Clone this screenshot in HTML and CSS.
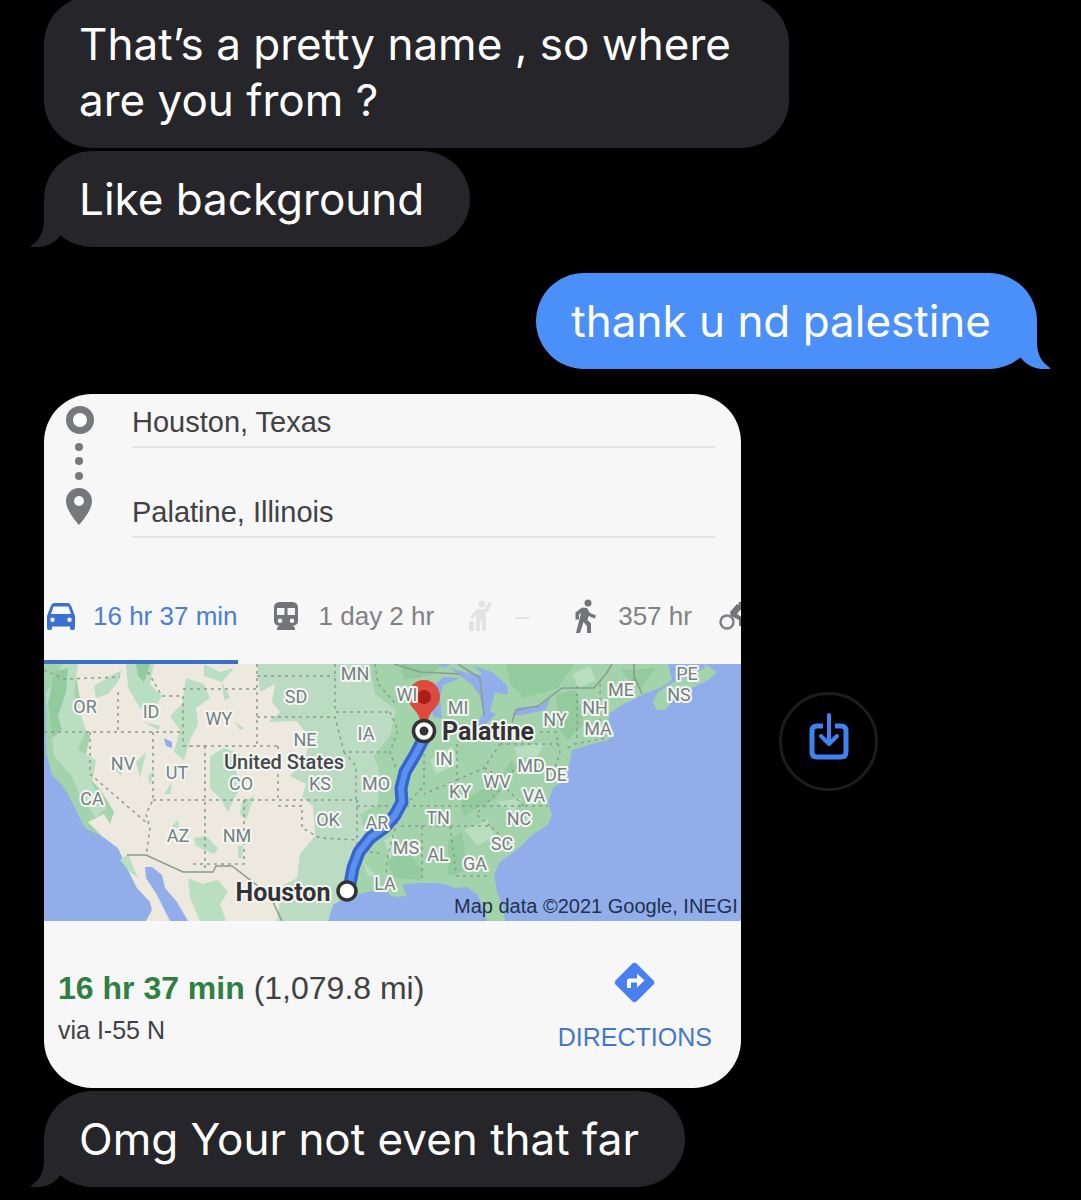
FILE: index.html
```html
<!DOCTYPE html>
<html lang="en">
<head>
  <meta charset="UTF-8" />
  <meta name="viewport" content="width=device-width, initial-scale=1.0"/>
  <title>Messages</title>
  <link rel="stylesheet" href="styles.css">
</head>
<body>

  <!-- Shared shapes -->
  <svg class="defs" aria-hidden="true">
    <symbol id="tail" viewBox="0 0 44 44">
      <path d="M15 0V17C15 30 10 38 1 43.500C12 46 24 42 31 33L44 20V0Z"/>
    </symbol>
  </svg>

  <main class="thread">
    <p class="bubble received">That’s a pretty name , so where are you from ?</p>
    <p class="bubble received last">Like background<svg class="tail"><use href="#tail"/></svg></p>

    <p class="bubble sent last">thank u nd palestine<svg class="tail"><use href="#tail"/></svg></p>

    <div class="attachment">
      <article class="card">
        <!-- From / to -->
        <form class="route-form">
          <svg class="stops" viewBox="0 0 88 144" aria-hidden="true">
            <circle cx="36" cy="26" r="10.500" fill="#fff" stroke="#77787c" stroke-width="7"/>
            <circle cx="35" cy="53" r="4"/>
            <circle cx="35" cy="67" r="4"/>
            <circle cx="35" cy="82" r="4"/>
            <path fill-rule="evenodd" d="M35 94C27.500 94 22 100 22 107C22 117 35 131 35 131S48 117 48 107C48 100 42.500 94 35 94ZM35 102a5 5 0 1 1 0 10a5 5 0 0 1 0-10Z"/>
          </svg>
          <div class="fields">
            <input type="text" value="Houston, Texas" aria-label="From">
            <input type="text" value="Palatine, Illinois" aria-label="To">
          </div>
        </form>

        <!-- Travel modes -->
        <nav class="modes">
          <button class="mode active">
            <svg viewBox="0 0 28 28"><path fill-rule="evenodd" d="M7 1H21Q23 1 24 3.500L28 14V26Q28 28 26 28H24.500Q23 28 23 26V24.500H5V26Q5 28 3.500 28H2Q0 28 0 26V14L4 3.500Q5 1 7 1ZM6.500 4.500L4 12H24L21.500 4.500ZM5.500 15.500a2.200 2.200 0 1 0 0 4.400a2.200 2.200 0 0 0 0-4.400ZM22.500 15.500a2.200 2.200 0 1 0 0 4.400a2.200 2.200 0 0 0 0-4.400Z"/></svg>
            16 hr 37 min
          </button>
          <button class="mode">
            <svg viewBox="0 0 28 28"><path fill-rule="evenodd" d="M8 0H18C23 0 25 2 25 6V19Q25 23 20 24L22 26V28H4V26L6 24Q1 23 1 19V6C1 2 3 0 8 0ZM4 6V13H11.500V6ZM14.500 6V13H22V6ZM7 16.500a2.300 2.300 0 1 0 0 4.600a2.300 2.300 0 0 0 0-4.600ZM19 16.500a2.300 2.300 0 1 0 0 4.600a2.300 2.300 0 0 0 0-4.600Z"/></svg>
            1 day 2 hr
          </button>
          <button class="mode taxi" disabled>
            <svg viewBox="0 0 28 32"><circle cx="13" cy="4" r="3.500"/><path d="M20 2L23 3L19 12H17V31H13V21H11V31H7V15L3 19L1 17L8 9H16ZM0 21H5V31H0Z"/></svg>
            –
          </button>
          <button class="mode walk">
            <svg viewBox="0 0 28 34"><circle cx="16" cy="4" r="3.500"/><path d="M10 8.500L15 9L18 14L24 16.500L23 19.500L16.500 17L15.500 21L19 24.500V34H15V27L11.500 23L8 34H4L9 14L7 15.500V20.500H3.500V13.500Z"/></svg>
            357 hr
          </button>
          <button class="mode bike" aria-label="Cycling">
            <svg viewBox="0 0 28 28"><circle cx="8" cy="20" r="6.500" fill="none" stroke="currentColor" stroke-width="2.500"/><path d="M11 10L18 2L28 5V9L21 8L18 12L23 15V24H20V18L12 14Z"/><circle cx="23" cy="0" r="3.500"/></svg>
          </button>
        </nav>

        <!-- Map -->
        <svg class="map" viewBox="0 0 697 257" role="img" aria-label="Route from Houston to Palatine">
          <rect class="water" width="697" height="257"/>
          <path class="land" d="M0 0L2 88L8 111L18 121L26 134L33 148L41 164L59 173L74 184L83 204L93 224L106 238L108 246L102 257H284L289 241L304 233L323 228L339 226L348 232L356 233L363 231L358 221L373 219L393 219L403 221L411 224L423 223L434 231L439 244L443 257H461L459 244L453 228L450 211L456 198L466 191L478 181L488 171L504 161L508 151L504 138L509 124L518 118L526 98L528 86L548 80L564 76L570 69L563 61L566 49L578 41L598 31L618 23L628 16L624 0Z"/>
          <path class="land" d="M609 38L614 28L628 19L648 11L661 4V0L673 8L664 16L648 24L631 34L621 46H613Z"/>

          <!-- Great plains -->
          <path class="plains" d="M205 0H325L331 30L352 46L346 72L330 92L336 110L334 140L316 150L322 172L304 196L300 233L289 241L284 257H230V110Z"/>

          <!-- Dry west -->
          <path class="desert" d="M30 0H213L216 28L231 20L228 38L236 48L224 58L252 57L265 72L262 93L246 112L262 120L258 133L269 142L271 172L256 190L253 214L238 222L233 257H102L108 246L106 238L93 224L83 204L74 184L59 173L44 158L60 150L66 160L70 148L58 128L44 112L42 90L46 72L34 57L36 34Z"/>
          <g class="forest">
            <path d="M2 30L18 0H34L30 30L42 66L34 86L52 96L48 120L62 144L52 154L36 132L28 112L10 92Z"/>
            <path d="M82 0H110L106 20L118 32L108 48L96 44L84 24Z"/>
            <path d="M50 22L66 12L78 6L74 18L64 30L52 34Z"/>
            <path d="M142 14L160 20L166 34L152 44L154 60L146 76L140 96L130 88L136 66L126 52L138 40Z"/>
            <path d="M160 0L176 8L190 4L178 18L160 12ZM178 18L186 34L180 36ZM190 58L200 64L196 66ZM100 58L116 62L114 66Z"/>
            <path d="M166 92L180 84L196 90L188 102L200 120L190 134L184 148L176 134L166 124ZM198 138L210 132L202 156L196 150Z"/>
            <path d="M150 174L162 172L174 184L170 190L152 182ZM194 182H199L198 194H194ZM128 162L134 156L136 166ZM120 130L128 118L126 130Z"/>
            <path d="M144 214L158 220L174 216L184 228L176 240L182 257H156L146 234Z"/>
            <path d="M68 104L76 96L78 112ZM92 98L102 88L96 114ZM104 112L110 106L106 122ZM76 196L84 190L94 214L86 208Z"/>
          </g>
          <g class="deep">
            <path d="M10 8L24 4L22 28L14 52L18 66L8 74L4 40Z"/>
            <path d="M92 0H106L100 18L94 12Z"/>
            <path d="M356 0H400L384 12L360 16Z"/>
            <path d="M462 0H530L514 24L480 34L466 20Z"/>
            <path d="M416 138L452 118L468 96L472 104L452 134L420 152Z"/>
            <path d="M344 196L360 186L380 206L376 216L350 214Z"/>
            <path d="M404 176L418 168L424 206L404 212Z"/>
            <path d="M512 30L532 26L540 60L524 76L514 64Z"/>
            <path d="M576 6L612 4L596 26Z"/>
          </g>
          <g class="pale">
            <path d="M276 40L306 46L290 58ZM306 92L330 96L318 112ZM280 10L296 4L292 20Z"/>
            <path d="M386 96L408 82L414 100L392 110ZM470 84L500 78L494 92L474 94ZM528 10L546 2L552 16L534 24Z"/>
            <path d="M420 166L444 156L450 172L434 182ZM452 138L478 134L470 148ZM340 176L352 170L346 196ZM318 196L334 214L324 212Z"/>
          </g>

          <!-- Gulf of California and lakes -->
          <g class="water">
            <path d="M101 203H108L118 211L121 224L133 238L144 257H126L113 231L102 214Z"/>
            <path d="M389 53L388 24L399 13L416 14L399 21L396 34L398 54Z"/>
            <path d="M406 4L419 8L439 11L430 2L448 8L463 21L464 31L451 28L444 56L438 44L436 32L428 21Z"/>
            <path d="M468 51L473 44L498 41L506 34L502 46L478 51Z"/>
            <path d="M392 0H406L402 4ZM442 46L452 50L440 62L430 64ZM120 74L128 78V84L122 82ZM504 108L506 122L502 116Z"/>
          </g>

          <!-- State lines -->
          <path class="border" d="M0 68H139M74 28V68M46 68V110L104 160M109 68V136L102 150L106 164L102 192M0 6L20 15L76 13M104 8L118 32H139V82H160M139 25H213M213 0V82M139 82H235M161 82V208M109 136H313M200 136V200H148M213 12H291M213 53H291L300 88H346M291 0V48H348M234 82V136M234 142H258V164L276 174L313 176M313 136V186L340 190M313 142H504M300 88L312 102V136M346 48L354 66L346 88L352 104M331 0L334 20L352 40M380 76V122L362 140L352 162L344 190L342 210M413 80V116L380 130M413 116L440 104L456 80V64M357 162H446L466 180M378 162V218M406 162L412 208M412 212H444M446 162L432 150L460 122M440 104L462 116L480 92M456 80H518M461 68H512L516 88L510 108M480 142L456 118M533 22V76M530 80L562 74M556 20V60M524 84L530 80M590 0V18"/>
          <path class="frontier" d="M83 191H102L139 208H169L172 202H188L214 222L228 236L238 257M350 0L376 8L416 10M414 0L436 14L440 52M468 58L472 46L494 42L518 24H550L562 10L568 0M590 0V12L598 30"/>

          <!-- Route -->
          <path class="route-edge" d="M380 74L371 91L361 108L357 124L358 138L351 151L341 163L326 174L315 188L309 204L306 220"/>
          <path class="route-line" d="M380 74L371 91L361 108L357 124L358 138L351 151L341 163L326 174L315 188L309 204L306 220"/>

          <!-- Destination pin -->
          <path fill="#dd4b3e" d="M380 16C371 16 364 23 364 33C364 43 374 46 376 56H384C386 46 396 43 396 33C396 23 389 16 380 16Z"/>
          <circle cx="380" cy="33" r="7" fill="#a81f17"/>

          <g class="state">
            <text x="41" y="42">OR</text>
            <text x="107" y="47">ID</text>
            <text x="175" y="54">WY</text>
            <text x="79" y="99">NV</text>
            <text x="133" y="108">UT</text>
            <text x="197" y="119">CO</text>
            <text x="48" y="134">CA</text>
            <text x="134" y="171">AZ</text>
            <text x="193" y="171">NM</text>
            <text x="252" y="32">SD</text>
            <text x="261" y="75">NE</text>
            <text x="311" y="9">MN</text>
            <text x="322" y="69">IA</text>
            <text x="276" y="119">KS</text>
            <text x="332" y="119">MO</text>
            <text x="284" y="155">OK</text>
            <text x="333" y="158">AR</text>
            <text x="363" y="30">WI</text>
            <text x="414" y="43">MI</text>
            <text x="400" y="94">IN</text>
            <text x="416" y="127">KY</text>
            <text x="394" y="153">TN</text>
            <text x="362" y="183">MS</text>
            <text x="394" y="190">AL</text>
            <text x="341" y="219">LA</text>
            <text x="431" y="199">GA</text>
            <text x="458" y="179">SC</text>
            <text x="475" y="154">NC</text>
            <text x="490" y="131">VA</text>
            <text x="453" y="117">WV</text>
            <text x="487" y="101">MD</text>
            <text x="512" y="110">DE</text>
            <text x="511" y="55">NY</text>
            <text x="554" y="64">MA</text>
            <text x="551" y="43">NH</text>
            <text x="577" y="25">ME</text>
            <text x="635" y="30">NS</text>
            <text x="643" y="9">PE</text>
          </g>
          <text class="country" x="240" y="98">United States</text>

          <!-- Start and end -->
          <circle cx="380" cy="67" r="10.500" fill="#fff" stroke="#333" stroke-width="3.500"/>
          <circle cx="380" cy="67" r="4.500" fill="#333"/>
          <circle cx="303" cy="227" r="9" fill="#fff" stroke="#333" stroke-width="3.500"/>
          <text class="city" x="444" y="67">Palatine</text>
          <text class="city" x="239" y="228">Houston</text>
          <text class="credit" x="410" y="249">Map data ©2021 Google, INEGI</text>
        </svg>

        <!-- Summary -->
        <footer class="summary">
          <div class="trip">
            <p class="time"><strong>16 hr 37 min</strong> (1,079.8 mi)</p>
            <p class="via">via I-55 N</p>
          </div>
          <a class="directions" href="#">
            <svg viewBox="0 0 41 41" aria-hidden="true">
              <path fill="#4a80ee" d="M18.500 1.500Q20.500 0 22.500 1.500L39.500 18.500Q41 20.500 39.500 22.500L22.500 39.500Q20.500 41 18.500 39.500L1.500 22.500Q0 20.500 1.500 18.500Z"/>
              <path fill="#fff" d="M13 26V19Q13 16.500 15.500 16.500H23V11.500L30.500 18.500L23 25.500V20.500H17V26Z"/>
            </svg>
            DIRECTIONS
          </a>
        </footer>
      </article>

      <button class="save" aria-label="Save">
        <svg viewBox="0 0 42 58" aria-hidden="true">
          <path d="M15 14H9Q4 14 4 19V40Q4 45 9 45H33Q38 45 38 40V19Q38 14 33 14H27" stroke-width="5"/>
          <path d="M21 3V31M13 24L21 32L29 24" stroke-width="4" stroke-linecap="round" stroke-linejoin="round"/>
        </svg>
      </button>
    </div>

    <p class="bubble received last">Omg Your not even that far<svg class="tail"><use href="#tail"/></svg></p>
  </main>

</body>
</html>
```
FILE: styles.css
```css
/* Basic Reset */
* {
  margin: 0;
  padding: 0;
  box-sizing: border-box;
}

body {
  background: #000;
  color: #fff;
  font-family: Inter, "Liberation Sans", sans-serif;
  overflow-x: hidden;
}

button {
  background: none;
  border: none;
  font: inherit;
  cursor: pointer;
}

.defs {
  position: absolute;
  width: 0;
  height: 0;
}

/* Thread, scrolled so the first bubble is slightly cut off */
.thread {
  display: flex;
  flex-direction: column;
  gap: 3px;
  margin-top: -4px;
  padding: 0 44px;
}

/* Bubbles */
.bubble {
  position: relative;
  max-width: 75%;
  padding: 20px 46px 20px 35px;
  border-radius: 48px;
  font-size: 44px;
  line-height: 56px;
}

.received {
  align-self: flex-start;
  background: #26252a;
  color: #fff;
  fill: #26252a;
}

.sent {
  align-self: flex-end;
  margin: 23px 0 22px;
  background: #4a90f8;
  fill: #4a90f8;
}

.tail {
  position: absolute;
  left: -15px;
  bottom: 0;
  width: 44px;
  height: 44px;
}

.sent .tail {
  left: auto;
  right: -15px;
  transform: scaleX(-1);
}

/* Attachment */
.attachment {
  display: flex;
  align-items: center;
  gap: 38px;
}

.card {
  width: 71%;
  max-width: 697px;
  overflow: hidden;
  border-radius: 48px;
  background: #f7f7f7;
  color: #414144;
  font-family: "Liberation Sans", Arial, sans-serif;
  font-size: 25px;
}

.route-form {
  display: flex;
  padding-right: 26px;
}

.stops {
  flex: none;
  width: 88px;
  height: 144px;
  fill: #77787c;
}

.fields {
  display: flex;
  flex: 1;
  flex-direction: column;
  gap: 40px;
  padding-top: 4px;
}

.fields input {
  width: 100%;
  height: 50px;
  border: none;
  border-bottom: 2px solid #e2e2e3;
  background: none;
  color: #414144;
  font-family: inherit;
  font-size: 29px;
}

/* Travel modes */
.modes {
  display: flex;
  gap: 35px;
  margin-top: 34px;
  padding-left: 3px;
}

.mode {
  display: flex;
  flex: none;
  align-items: center;
  gap: 18px;
  height: 92px;
  border-bottom: 4px solid transparent;
  color: #808184;
  font-size: 26px;
}

.mode svg {
  width: 28px;
  height: 28px;
  fill: #737477;
}

.mode.active {
  margin-left: -3px;
  padding-left: 3px;
  border-color: #3c6fca;
  color: #4a7fd2;
}

.mode.active svg {
  fill: #3c6fd4;
}

.mode:disabled,
.mode:disabled svg {
  color: #e3e3e3;
  fill: #e3e3e3;
}

.mode.taxi {
  min-width: 68px;
}

.mode.taxi svg,
.mode.walk svg {
  height: 34px;
}

.mode.bike {
  margin-left: -8px;
}

/* Map */
.map {
  display: block;
  width: 100%;
}

.water { fill: #91aeeb; }
.land { fill: #a3d3ab; }
.plains { fill: #bbdcc3; }
.desert { fill: #ede9df; }
.forest { fill: #b9dec2; }
.deep { fill: #93cb9e; }
.pale { fill: #b9ddbf; }

.border,
.frontier {
  fill: none;
  stroke: #8b9b90;
  stroke-width: 1.5;
}

.border {
  stroke-dasharray: 3 4;
}

.route-edge,
.route-line {
  fill: none;
  stroke: #3565cd;
  stroke-width: 13;
  stroke-linejoin: round;
}

.route-line {
  stroke: #5b90ee;
  stroke-width: 6;
}

.map text {
  dominant-baseline: central;
  text-anchor: middle;
  paint-order: stroke;
  stroke: #f4f7f4;
  stroke-width: 4;
  stroke-linejoin: round;
  font-family: Roboto, sans-serif;
}

.map .state {
  fill: #75807f;
  font-size: 18px;
}

.map .country {
  fill: #46484a;
  font-size: 20px;
  font-weight: 500;
}

.map .city {
  fill: #333;
  font-size: 25px;
  font-weight: 700;
}

.map .credit {
  dominant-baseline: auto;
  text-anchor: start;
  stroke: none;
  fill: #23304e;
  font-family: "Liberation Sans", Arial, sans-serif;
  font-size: 20px;
}

/* Summary */
.summary {
  display: flex;
  align-items: flex-start;
  justify-content: space-between;
  padding: 41px 29px 33px 14px;
}

.trip {
  padding-top: 6px;
}

.time {
  font-size: 32px;
  line-height: 40px;
}

.time strong {
  color: #2f7f41;
}

.via {
  line-height: 44px;
}

.directions {
  display: flex;
  flex-direction: column;
  align-items: center;
  gap: 16px;
  color: #4478c4;
  line-height: 36px;
  text-decoration: none;
}

.directions svg {
  width: 41px;
  height: 41px;
}

/* Save button */
.save {
  display: flex;
  align-items: center;
  justify-content: center;
  width: 99px;
  height: 99px;
  border: 3px solid #1d1d1f;
  border-radius: 50%;
}

.save svg {
  width: 42px;
  height: 58px;
  fill: none;
  stroke: #3f82f2;
}
```
